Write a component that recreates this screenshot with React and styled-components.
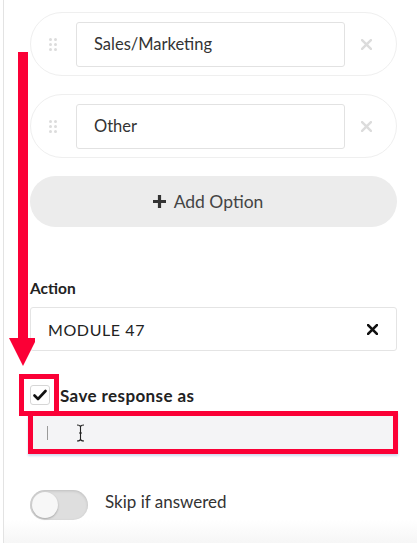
import styled, { createGlobalStyle } from "styled-components";

const RED = "#fb0036";

const GlobalStyled = createGlobalStyle`
  *, *::before, *::after{
    box-sizing: border-box;
  }
  body{
    margin: 0;
    background: #fff;
    font-family: Lato, "Open Sans", sans-serif;
    color: #333;
  }
`;

const Panel = styled.div`
  position: relative;
  margin-left: 3px;
  border-left: 1px solid #e3e3e3;
  min-height: 543px;
  padding: 12px 20px 0 26px;
  display: flex;
  flex-direction: column;
  background: linear-gradient(to bottom, #fff 0, #fff 520px, #f6f6f6 543px);
`;

const OptionList = styled.div`
  display: flex;
  flex-direction: column;
  gap: 18px;
`;

const OptionRow = styled.div`
  height: 64px;
  border: 1px solid #efefef;
  border-radius: 32px;
  display: flex;
  align-items: center;
  padding: 0 24px 0 18px;
`;

const Handle = styled.div`
  display: grid;
  grid-template-columns: repeat(2, 3px);
  gap: 2px;
  margin-right: 19px;
  span {
    width: 3px;
    height: 3px;
    border-radius: 50%;
    background: #dcdcdc;
  }
`;

const OptionInput = styled.div`
  flex: 1;
  height: 45px;
  border: 1px solid #e2e2e2;
  border-radius: 3px;
  display: flex;
  align-items: center;
  padding-left: 17px;
  font-size: 16.5px;
  color: #333;
  margin-right: 16px;
`;

const Remove = styled.svg`
  width: 11px;
  height: 11px;
  flex: none;
`;

const AddButton = styled.div`
  margin-top: 18px;
  height: 51px;
  border-radius: 26px;
  background: #ececec;
  display: flex;
  align-items: center;
  justify-content: center;
  gap: 7px;
  font-size: 17.5px;
  color: #444;
  svg {
    margin-left: -12px;
  }
`;

const Label = styled.div`
  margin-top: 52px;
  font-size: 15.5px;
  font-weight: 700;
  color: #222;
  line-height: 18px;
`;

const Select = styled.div`
  margin-top: 10px;
  height: 44px;
  border: 1px solid #e4e4e4;
  border-radius: 3px;
  display: flex;
  align-items: center;
  justify-content: space-between;
  padding: 0 18px 0 17px;
  font-size: 16px;
  letter-spacing: 0.6px;
  color: #222;
`;

const CheckRow = styled.div`
  margin-top: 34px;
  display: flex;
  align-items: center;
  gap: 10px;
  height: 20px;
`;

const CheckWrap = styled.div`
  position: relative;
  width: 20px;
  height: 20px;
  &::after {
    content: "";
    position: absolute;
    left: -11px;
    top: -11px;
    width: 40px;
    height: 42px;
    border: 5px solid ${RED};
  }
`;

const CheckBox = styled.div`
  width: 20px;
  height: 20px;
  border: 1px solid #d6d6d6;
  border-radius: 3px;
  display: flex;
  align-items: center;
  justify-content: center;
  background: #fff;
`;

const CheckLabel = styled.span`
  font-size: 17px;
  font-weight: 700;
  letter-spacing: 0.4px;
  color: #222;
`;

const SaveInput = styled.div`
  margin: 6px -1px 0 -2px;
  height: 43px;
  border: 5px solid ${RED};
  background: #f4f4f6;
  box-shadow: 0 2px 2px rgba(120, 150, 210, 0.35);
  display: flex;
  align-items: center;
  padding-left: 14px;
  gap: 28px;
`;

const Caret = styled.span`
  width: 1px;
  height: 14px;
  background: #9a9a9a;
`;

const ToggleRow = styled.div`
  margin-top: 36px;
  display: flex;
  align-items: center;
  gap: 17px;
`;

const Track = styled.div`
  width: 58px;
  height: 30px;
  border-radius: 15px;
  background: #dedede;
  box-shadow: inset 0 1px 3px rgba(0, 0, 0, 0.15);
  padding: 2px;
  display: flex;
  align-items: center;
  justify-content: ${({ on }) => (on ? "flex-end" : "flex-start")};
`;

const Knob = styled.div`
  width: 26px;
  height: 26px;
  border-radius: 50%;
  background: #f7f7f7;
  box-shadow: 0 1px 2px rgba(0, 0, 0, 0.25);
`;

const ToggleLabel = styled.span`
  font-size: 17px;
  color: #333;
  margin-top: -7px;
`;

const Arrow = styled.svg`
  position: absolute;
  left: 1px;
  top: 52px;
  width: 30px;
  height: 315px;
`;

const X = ({ color, w = 2 }) => (
  <Remove viewBox="0 0 10 10">
    <path d="M1 1 L9 9 M9 1 L1 9" stroke={color} strokeWidth={w} strokeLinecap="round" />
  </Remove>
);

const options = ["Sales/Marketing", "Other"];

export default function App() {
  return (
    <>
      <GlobalStyled />
      <Panel>
        <OptionList>
          {options.map((o) => (
            <OptionRow key={o}>
              <Handle>
                {Array.from({ length: 6 }).map((_, i) => (
                  <span key={i} />
                ))}
              </Handle>
              <OptionInput>{o}</OptionInput>
              <X color="#dcdcdc" w={2.2} />
            </OptionRow>
          ))}
        </OptionList>
        <AddButton>
          <svg width="15" height="15" viewBox="0 0 15 15">
            <path d="M7.5 1 V14 M1 7.5 H14" stroke="#333" strokeWidth="3.2" />
          </svg>
          Add Option
        </AddButton>
        <Label>Action</Label>
        <Select>
          MODULE 47
          <X color="#111" w={2.4} />
        </Select>
        <CheckRow>
          <CheckWrap>
            <CheckBox>
              <svg width="14" height="12" viewBox="0 0 14 12">
                <path d="M1.5 6.5 L5 10 L12.5 2" stroke="#111" strokeWidth="2.6" fill="none" strokeLinecap="round" strokeLinejoin="round" />
              </svg>
            </CheckBox>
          </CheckWrap>
          <CheckLabel>Save response as</CheckLabel>
        </CheckRow>
        <SaveInput>
          <Caret />
          <svg width="9" height="18" viewBox="0 0 9 18">
            <path d="M1 1 Q4.5 1 4.5 3 V15 Q4.5 17 1 17 M8 1 Q4.5 1 4.5 3 M4.5 15 Q4.5 17 8 17 M3 9 H6" stroke="#222" strokeWidth="1.1" fill="none" />
          </svg>
        </SaveInput>
        <ToggleRow>
          <Track>
            <Knob />
          </Track>
          <ToggleLabel>Skip if answered</ToggleLabel>
        </ToggleRow>
        <Arrow viewBox="0 0 30 315">
          <rect x="13" y="0" width="10" height="288" fill={RED} />
          <path d="M4 286 L32 286 L18 314 Z" fill={RED} />
        </Arrow>
      </Panel>
    </>
  );
}
